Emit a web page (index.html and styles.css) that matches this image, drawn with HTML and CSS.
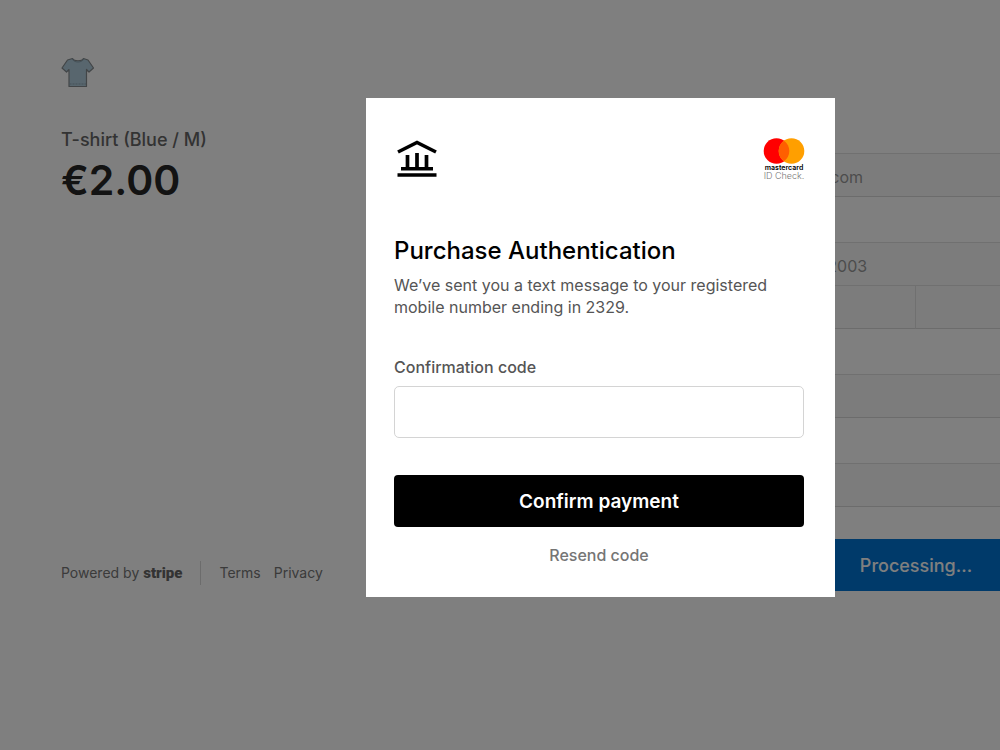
FILE: index.html
```html
<!DOCTYPE html>
<html lang="en">
<head>
    <meta charset="UTF-8">
    <meta name="viewport" content="width=device-width, initial-scale=1.0">
    <title>Checkout</title>
    <link rel="stylesheet" href="styles.css">
</head>
<body>
    <main class="page">
        <section class="summary">
            <svg class="product-icon" viewBox="0 0 34 34" role="img" aria-label="Blue T-shirt">
                <path d="M11.5 2.5 C13 5.5 21 5.5 22.500 2.500 L27 4 L32.500 12 L28 16 L25.500 13.500 L25.500 30.500 L8 30.500 L8 13.500 L5.500 16 L1 12 L6.500 4 Z" fill="#b0ccdc" stroke="#858b8e" stroke-width="1.200" stroke-linejoin="round"/>
                <path d="M11.500 3 C12.500 7 21.500 7 22.500 3" fill="none" stroke="#8ba3b0" stroke-width="1"/>
                <path d="M8.500 28 H25" fill="none" stroke="#8ba3b0" stroke-width="1" stroke-dasharray="2 1"/>
            </svg>
            <h2 class="product-name">T-shirt (Blue / M)</h2>
            <p class="price">€2.00</p>
            <footer class="footer">
                <span class="powered">Powered by <strong class="brand">stripe</strong></span>
                <a href="#terms">Terms</a>
                <a href="#privacy">Privacy</a>
            </footer>
        </section>

        <form class="payment">
            <label for="email">Email</label>
            <input class="field" type="email" id="email" value="jenny.li@example.com">
            <label for="card">Card information</label>
            <div class="card-group">
                <input class="field" type="text" id="card" value="4000 0027 6000 2003">
                <input class="field" type="text" aria-label="Expiry">
                <input class="field" type="text" aria-label="CVC">
            </div>
            <label for="name">Name on card</label>
            <input class="field" type="text" id="name">
            <label for="country">Country</label>
            <input class="field" type="text" id="country">
            <button class="pay" type="submit">Processing...</button>
        </form>
    </main>

    <div class="overlay">
        <div class="modal" role="dialog" aria-labelledby="title">
            <header class="logos">
                <!-- bank -->
                <svg class="bank" viewBox="0 0 40 38" aria-hidden="true">
                    <path d="M1 12 L20 2.500 L39 12" fill="none" stroke="#000" stroke-width="3.600"/>
                    <path d="M10.500 15 V29 M20 13 V29 M29.500 15 V29" stroke="#000" stroke-width="3.700"/>
                    <path d="M4 28.800 H36 M0.500 35 H39.500" stroke="#000" stroke-width="3.500"/>
                </svg>
                <!-- card network -->
                <div class="network">
                    <svg viewBox="0 0 42 26" aria-hidden="true">
                        <circle cx="13.500" cy="13" r="12.800" fill="#ff0000"/>
                        <circle cx="28.500" cy="13" r="12.800" fill="#ff9f00"/>
                        <path d="M21 2.630 A12.800 12.800 0 0 1 21 23.370 A12.800 12.800 0 0 1 21 2.630 Z" fill="#ff5f00"/>
                    </svg>
                    <strong>mastercard</strong>
                    <span>ID Check.</span>
                </div>
            </header>
            <h1 id="title">Purchase Authentication</h1>
            <p class="message">We’ve sent you a text message to your registered mobile number ending in 2329.</p>
            <form>
                <label for="code">Confirmation code</label>
                <input class="code" type="text" id="code">
                <button class="confirm" type="submit">Confirm payment</button>
                <button class="resend" type="button">Resend code</button>
            </form>
        </div>
    </div>
</body>
</html>
```
FILE: styles.css
```css
* {
    box-sizing: border-box;
}

body {
    margin: 0;
    overflow: hidden;
    background-color: #fff;
    font-family: Inter, "Liberation Sans", sans-serif;
}

h1, h2, p {
    margin: 0;
}

input, button {
    font-family: inherit;
}

/* checkout page */
.page {
    display: flex;
    justify-content: space-between;
    min-width: 1201px;
    padding: 56px 40px 0 61px;
}

.summary {
    display: flex;
    flex-direction: column;
    width: 300px;
    height: 529px;
}

.product-icon {
    width: 34px;
    height: 34px;
}

.product-name {
    margin-top: 37px;
    color: #666;
    font-size: 18px;
    font-weight: 500;
    line-height: 26px;
}

.price {
    margin-top: 3px;
    color: #262626;
    font-size: 41px;
    font-weight: 600;
    line-height: 48px;
}

.footer {
    display: flex;
    align-items: center;
    gap: 13px;
    margin-top: auto;
    color: #767676;
    font-size: 14px;
    line-height: 24px;
    white-space: nowrap;
}

.footer a {
    color: inherit;
    text-decoration: none;
}

.powered {
    margin-right: 5px;
    padding-right: 18px;
    border-right: 1px solid #d8d8d8;
}

.brand {
    color: #666;
    font-family: Roboto, sans-serif;
    font-size: 15px;
    font-weight: 900;
}

.payment {
    display: flex;
    flex-direction: column;
    width: 490px;
    padding-top: 52px;
}

.payment label {
    height: 45px;
    padding-top: 16px;
    color: #666;
    font-size: 13px;
}

.field {
    width: 100%;
    height: 44px;
    padding: 4px 22px 0;
    border: 1px solid #e0e0e0;
    border-bottom-color: #d8d8d8;
    background-color: #f9f9f9;
    color: #999;
    font-size: 16px;
}

.card-group {
    display: grid;
    grid-template-columns: 1fr 1fr;
}

.card-group .field:first-child {
    grid-column: 1 / 3;
    height: 43px;
    border-bottom: 0;
}

.card-group .field:last-child {
    border-left: 0;
}

.pay {
    height: 52px;
    margin-top: 32px;
    border: 0;
    border-radius: 4px;
    background-color: #0074d4;
    color: #fff;
    font-size: 18px;
    font-weight: 500;
}

/* authentication dialog */
.overlay {
    position: fixed;
    top: 0;
    bottom: 0;
    left: 0;
    display: flex;
    justify-content: center;
    align-items: flex-start;
    width: 100%;
    min-width: 1201px;
    padding-top: 98px;
    background-color: rgba(0, 0, 0, 0.5);
}

.modal {
    width: 469px;
    padding: 40px 31px 28px 28px;
    background-color: #fff;
}

.logos {
    display: flex;
    justify-content: space-between;
    align-items: flex-start;
    height: 95px;
}

.bank {
    width: 40px;
    height: 38px;
    margin: 2px 0 0 3px;
}

.network {
    display: flex;
    flex-direction: column;
    align-items: center;
    width: 40px;
    white-space: nowrap;
}

.network svg {
    width: 42px;
    height: 26px;
}

.network strong {
    font-size: 7px;
    font-weight: 600;
    line-height: 7px;
}

.network span {
    color: #777;
    font-size: 9px;
    font-weight: 300;
    line-height: 10px;
}

.modal h1 {
    color: #000;
    font-size: 24px;
    font-weight: 500;
    line-height: 36px;
}

.message {
    margin-top: 5px;
    color: #555;
    font-size: 16px;
    line-height: 22px;
}

.modal form {
    display: flex;
    flex-direction: column;
}

.modal label {
    margin-top: 38px;
    color: #555;
    font-size: 16px;
    font-weight: 500;
    line-height: 22px;
}

.code {
    width: 100%;
    height: 52px;
    margin-top: 8px;
    padding: 0 12px;
    border: 1px solid #d4d4d4;
    border-radius: 5px;
    background-color: #fff;
    font-size: 16px;
}

.confirm {
    height: 52px;
    margin-top: 37px;
    border: 0;
    border-radius: 4px;
    background-color: #000;
    color: #fff;
    font-size: 19px;
    font-weight: 600;
}

.resend {
    align-self: center;
    margin-top: 14px;
    padding: 0;
    border: 0;
    background: none;
    color: #757575;
    font-size: 16px;
    font-weight: 500;
    line-height: 28px;
}
```
